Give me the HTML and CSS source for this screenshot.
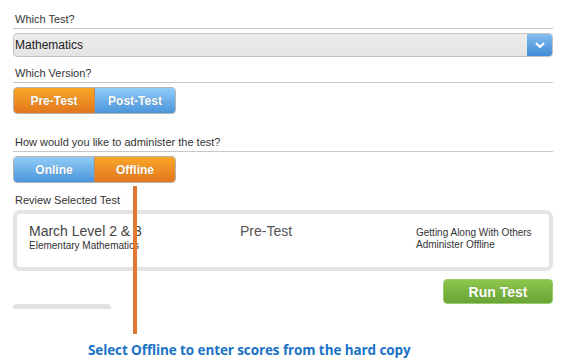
FILE: index.html
```html
<!DOCTYPE html>
<html lang="en">
<head>
  <meta charset="UTF-8">
  <title>Run Test</title>
  <link rel="stylesheet" href="styles.css">
</head>
<body>

  <div class="panel">
    <div class="field-label">Which Test?</div>
    <div class="select-box">
      <span class="select-value">Mathematics</span>
      <span class="select-arrow">
        <svg width="10" height="7" viewBox="0 0 10 7"><path d="M1.5 1.5 L5 5 L8.5 1.5" fill="none" stroke="#fff" stroke-width="2" stroke-linecap="round" stroke-linejoin="round"/></svg>
      </span>
    </div>

    <div class="field-label gap">Which Version?</div>
    <div class="toggle">
      <button class="toggle-btn orange">Pre-Test</button>
      <button class="toggle-btn blue">Post-Test</button>
    </div>

    <div class="field-label gap-lg">How would you like to administer the test?</div>
    <div class="toggle">
      <button class="toggle-btn blue">Online</button>
      <button class="toggle-btn orange">Offline</button>
    </div>

    <div class="plain-label">Review Selected Test</div>
    <div class="review-card">
      <div class="col col-left">
        <div class="big">March Level 2 &amp; 3</div>
        <div class="small">Elementary Mathematics</div>
      </div>
      <div class="col col-mid">
        <div class="big">Pre-Test</div>
      </div>
      <div class="col col-right">
        <div class="small">Getting Along With Others</div>
        <div class="small">Administer Offline</div>
      </div>
    </div>

    <div class="actions">
      <button class="run-btn">Run Test</button>
    </div>
    <div class="next-tab"></div>
  </div>

  <!-- callout -->
  <div class="callout-line"></div>
  <div class="callout-text">Select Offline to enter scores from the hard copy</div>

</body>
</html>
```

FILE: styles.css
```css
body {
  margin: 0;
  font-family: "Liberation Sans", Arial, sans-serif;
  color: #333;
  background: #fff;
}

.panel {
  width: 540px;
  padding: 13px 0 0 13px;
}

.field-label {
  font-size: 11px;
  line-height: 13px;
  padding: 0 0 2px 2px;
  border-bottom: 1px solid #c8c8c8;
}

.field-label.gap {
  margin-top: 10px;
}

.field-label.gap-lg {
  margin-top: 22px;
}

.plain-label {
  font-size: 11px;
  line-height: 13px;
  margin-top: 11px;
  padding-left: 2px;
}

.select-box {
  margin-top: 4px;
  height: 22px;
  display: flex;
  align-items: center;
  border: 1px solid #c4c4c4;
  border-radius: 4px;
  background: linear-gradient(#ececec, #e4e4e4);
  overflow: hidden;
}

.select-value {
  flex: 1;
  font-size: 12px;
  color: #222;
  padding-left: 1px;
}

.select-arrow {
  width: 25px;
  height: 100%;
  display: flex;
  align-items: center;
  justify-content: center;
  background: linear-gradient(#82bdee, #3f8bd6);
}

.toggle {
  margin-top: 4px;
  display: flex;
  width: 161px;
  height: 25px;
  border: 1px solid #b4b4b4;
  border-radius: 4px;
  overflow: hidden;
}

.toggle-btn {
  flex: 1;
  border: 0;
  margin: 0;
  padding: 0;
  font-family: "Liberation Sans", Arial, sans-serif;
  font-size: 12px;
  font-weight: bold;
  color: #fff;
  text-shadow: 0 0 1px rgba(0, 0, 0, 0.25);
}

.toggle-btn + .toggle-btn {
  border-left: 1px solid #c08a5a;
}

.toggle-btn.orange {
  background: linear-gradient(#f9a627, #e2771e);
}

.toggle-btn.blue {
  background: linear-gradient(#90ccf7, #4b95db);
}

.review-card {
  margin-top: 3px;
  height: 44px;
  border: 4px solid #e4e4e4;
  border-radius: 7px;
  display: flex;
  padding: 9px 0 0 12px;
}

.col-left {
  width: 211px;
}

.col-mid {
  width: 176px;
}

.col-right {
  padding-top: 4px;
}

.big {
  font-size: 14px;
  line-height: 17px;
  color: #444;
}

.col-mid .big {
  color: #555;
}

.small {
  font-size: 10px;
  line-height: 12px;
  color: #333;
}

.actions {
  display: flex;
  justify-content: flex-end;
  margin-top: 8px;
}

.run-btn {
  width: 110px;
  height: 25px;
  border: 1px solid #9ccc70;
  border-radius: 4px;
  background: linear-gradient(#8cc64c, #69a436);
  color: #fff;
  font-family: "Liberation Sans", Arial, sans-serif;
  font-size: 14px;
  font-weight: bold;
  text-shadow: 0 0 1px rgba(0, 0, 0, 0.2);
  padding: 0;
}

.next-tab {
  width: 98px;
  height: 5px;
  background: #e2e2e2;
  border-radius: 4px 4px 0 0;
}

.callout-line {
  position: absolute;
  left: 133px;
  top: 186px;
  width: 4px;
  height: 148px;
  background: #e07a33;
}

.callout-text {
  position: absolute;
  left: 88px;
  top: 341px;
  font-family: "Open Sans", sans-serif;
  font-size: 13.5px;
  font-weight: bold;
  color: #1a72c7;
  letter-spacing: -0.1px;
}
```
